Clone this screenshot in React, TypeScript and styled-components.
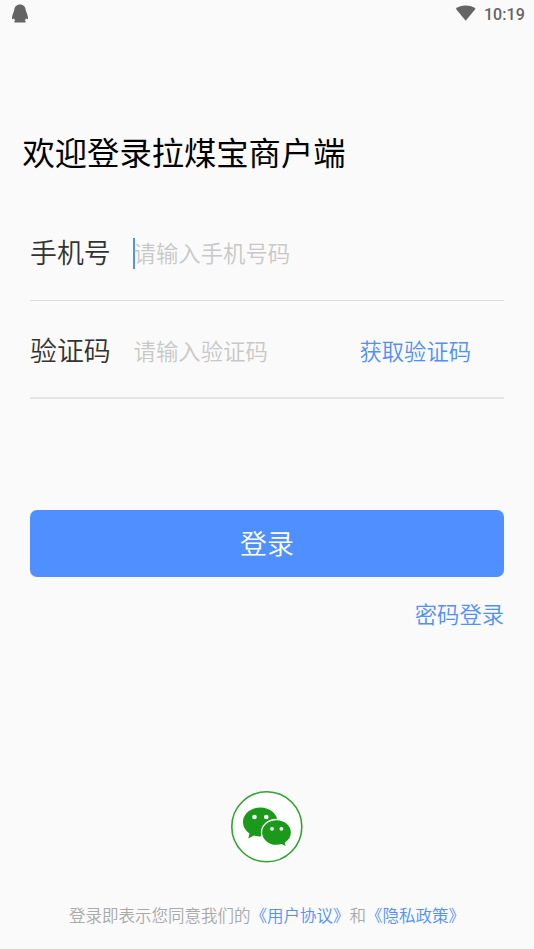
import { useState } from "react";

// Utils
import styled, { createGlobalStyle } from "styled-components";

const GlobalStyle = createGlobalStyle`
  * {
    box-sizing: border-box;
  }

  body {
    margin: 0;
    background: #fafafa;
    font-family: "Noto Sans CJK SC", sans-serif;
    font-weight: 350;
  }
`;

const Screen = styled.div`
  display: flex;
  flex-direction: column;
  width: 534px;
  height: 949px;
  overflow: hidden;
  background: #fafafa;
`;

const StatusBar = styled.header`
  display: flex;
  justify-content: space-between;
  height: 30px;
  padding: 3px 9px 0 11px;
  color: #646464;
`;

const StatusGroup = styled.div`
  display: flex;
  gap: 8px;
`;

const Clock = styled.span`
  font: 500 16px/23px Roboto, sans-serif;
  letter-spacing: 0.1px;
`;

const Title = styled.h1`
  margin: 97px 0 0 22.5px;
  font-size: 32.3px;
  font-weight: 400;
  line-height: 48px;
  color: #000;
`;

const Form = styled.form`
  display: flex;
  flex-direction: column;
  padding: 0 30px;
  margin-top: 28px;
`;

const Field = styled.label<{ $line: string }>`
  display: flex;
  align-items: flex-start;
  height: 98px;
  border-bottom: ${({ $line }) => $line};
`;

const Label = styled.span`
  width: 103.5px;
  margin-top: 29px;
  font-size: 26.9px;
  line-height: 40px;
  color: #333;
`;

const Caret = styled.i`
  width: 2px;
  height: 31px;
  margin: 35px -1.5px 0 -0.5px;
  background: #4f8fff;
`;

const Input = styled.input`
  width: 226px;
  height: 32px;
  padding: 0;
  margin-top: 33px;
  border: none;
  outline: none;
  background: none;
  font-family: inherit;
  font-size: 22.4px;
  font-weight: inherit;
  color: #333;

  &::placeholder {
    color: #c8c8c8;
    opacity: 1;
  }
`;

const TextButton = styled.button`
  padding: 0;
  border: none;
  background: none;
  font-family: inherit;
  font-size: 22.3px;
  font-weight: inherit;
  line-height: 32px;
  color: #4f8fff;
`;

const CodeButton = styled(TextButton)`
  margin-top: 33px;
`;

const PasswordButton = styled(TextButton)`
  align-self: flex-end;
  margin-top: 20px;
`;

const SubmitButton = styled.button`
  height: 67px;
  padding: 0 0 2px;
  margin-top: 111px;
  border: none;
  border-radius: 7px;
  background: #508fff;
  font-family: inherit;
  font-size: 26.9px;
  font-weight: inherit;
  color: #fff;
`;

const WechatButton = styled.button`
  align-self: center;
  width: 73px;
  height: 72px;
  padding: 0;
  margin: 162px 0 0;
  border: none;
  background: none;

  svg {
    display: block;
  }
`;

const Agreement = styled.p`
  margin: 40px 0 0 69px;
  font-size: 16.5px;
  line-height: 24px;
  white-space: nowrap;
  color: #a9a9a9;
`;

const Link = styled.a`
  color: #4f8fff;
`;

function PenguinIcon(): JSX.Element {
  return (
    <svg width="18" height="22" viewBox="0 0 18 22" fill="#646464">
      <path d="M9 1.4C5.500 1.400 3.300 3.700 3.200 7.500C2.200 10 1 13 1 15c0 1.200.4 1.400 1 1.100l1.200-.7c.2.900.5 1.500 1 2.100-.8.500-1.100 1.200-.8 1.900h11.200c.3-.7 0-1.400-.8-1.900.5-.6.800-1.200 1-2.100l1.200.7c.6.300 1 .1 1-1.100 0-2-1.200-5-2.200-7.500C14.700 3.700 12.500 1.400 9 1.400z" />
    </svg>
  );
}

function WifiIcon(): JSX.Element {
  return (
    <svg width="21" height="20" viewBox="0 0 21 20" fill="#646464">
      <path d="M.8 5.700C3.500 3.500 6.800 2.400 10.700 2.400s7.200 1.100 9.900 3.300L10.700 17.800z" />
    </svg>
  );
}

function WechatIcon(): JSX.Element {
  return (
    <svg width="72" height="72" viewBox="0 0 72 72">
      <circle cx="35.8" cy="35.8" r="35" fill="#fff" stroke="#2fa42f" strokeWidth="1.6" />
      <path
        fill="#1a991a"
        d="M29.300 16.500C19.500 16.500 12 23 12 31c0 4.700 2.600 8.700 6.500 11.400L17.300 47.500l5.700-3.100c2 .6 4.100 1 6.300 1 9.800 0 17.300-6.400 17.300-14.400s-7.500-14.500-17.300-14.500z"
      />
      <path
        fill="#1a991a"
        stroke="#fff"
        strokeWidth="1.3"
        d="M45.500 28.500c-8.500 0-15 5.700-15 13s6.500 13 15 13c1.900 0 3.700-.3 5.300-.8l4.900 2.700-1.200-4.500c3.600-2.400 6-6.100 6-10.400 0-7.300-6.600-13-15-13z"
      />
      <g fill="#fff">
        <circle cx="23.5" cy="26" r="2.3" />
        <circle cx="35.3" cy="26" r="2.3" />
        <circle cx="41" cy="37.8" r="1.9" />
        <circle cx="50.4" cy="37.8" r="1.9" />
      </g>
    </svg>
  );
}

export default function App(): JSX.Element {
  const [phone, setPhone] = useState("");
  const [code, setCode] = useState("");

  return (
    <Screen>
      <GlobalStyle />
      <StatusBar>
        <PenguinIcon />
        <StatusGroup>
          <WifiIcon />
          <Clock>10:19</Clock>
        </StatusGroup>
      </StatusBar>
      <Title>欢迎登录拉煤宝商户端</Title>
      <Form onSubmit={event => event.preventDefault()}>
        <Field $line="1px solid #dcdcdc">
          <Label>手机号</Label>
          <Caret />
          <Input
            placeholder="请输入手机号码"
            value={phone}
            onChange={({ currentTarget }) => setPhone(currentTarget.value)}
          />
        </Field>
        <Field $line="2px solid #e4e4e4">
          <Label>验证码</Label>
          <Input
            placeholder="请输入验证码"
            value={code}
            onChange={({ currentTarget }) => setCode(currentTarget.value)}
          />
          <CodeButton type="button">获取验证码</CodeButton>
        </Field>
        <SubmitButton type="submit">登录</SubmitButton>
        <PasswordButton type="button">密码登录</PasswordButton>
      </Form>
      <WechatButton type="button" aria-label="微信登录">
        <WechatIcon />
      </WechatButton>
      <Agreement>
        登录即表示您同意我们的<Link>《用户协议》</Link>和<Link>《隐私政策》</Link>
      </Agreement>
    </Screen>
  );
}
